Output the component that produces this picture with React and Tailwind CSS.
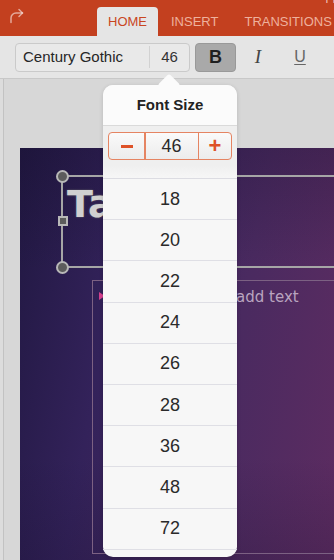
const sizes = [18, 20, 22, 24, 26, 28, 36, 48, 72];

const Handle = ({ className }) => (
  <div
    className={`absolute w-[13px] h-[13px] rounded-full bg-[#5c5c5c] border-2 border-[#b8b8b8] ${className}`}
  />
);

const App = () => {
  return (
    <div
      className="relative w-[334px] h-[560px] overflow-hidden bg-[#d7d7d7] flex flex-col"
      style={{ fontFamily: '"Liberation Sans", Arial, sans-serif' }}
    >
      {/* Ribbon tabs */}
      <div className="relative h-[36px] shrink-0 bg-[#c3401f] flex items-end">
        <span className="absolute right-[-14px] top-[-9px] text-[11px] text-[#f3c9bb]">
          Pres
        </span>
        <svg
          className="self-start mt-[6px] ml-[7px]"
          width="18"
          height="18"
          viewBox="0 0 18 18"
          fill="none"
          stroke="rgba(255,255,255,0.55)"
          strokeWidth="1.5"
          strokeLinecap="round"
          strokeLinejoin="round"
        >
          <path d="M4 16.5 V12 a5 5 0 0 1 5 -5 H15.5" />
          <path d="M12 3.5 L15.5 7 L12 10.5" />
        </svg>
        <div className="ml-[72px] w-[61px] h-[29px] rounded-t-[4px] bg-[#e5e5e5] flex items-center justify-center text-[13px] text-[#c9461f]">
          HOME
        </div>
        <div className="ml-[13px] h-[29px] flex items-center text-[13px] text-[#eeb19d]">
          INSERT
        </div>
        <div className="ml-[26px] h-[29px] flex items-center text-[13px] text-[#eeb19d] whitespace-nowrap">
          TRANSITIONS
        </div>
      </div>

      {/* Toolbar */}
      <div className="h-[43px] shrink-0 bg-[#e5e5e5] border-b border-[#c8c8c8] flex items-center pl-[15px]">
        <div className="w-[175px] h-[29px] rounded-[4px] border border-[#cacaca] bg-[#e9e9e9] flex items-center">
          <div className="w-[133px] pl-[7px] text-[15px] text-[#262626]">Century Gothic</div>
          <div className="w-px h-[22px] bg-[#d2d2d2]" />
          <div className="flex-1 text-center text-[15px] text-[#333]">46</div>
        </div>
        <div className="ml-[5px] w-[41px] h-[29px] rounded-[4px] border border-[#999] bg-[#a9a9a9] flex items-center justify-center text-[18px] font-bold text-[#1f1f1f]">
          B
        </div>
        <div
          className="ml-[12px] w-[20px] text-center text-[19px] italic text-[#444]"
          style={{ fontFamily: '"Liberation Serif", serif' }}
        >
          I
        </div>
        <div className="ml-[22px] w-[20px] text-center text-[16px] underline underline-offset-2 text-[#666]">
          U
        </div>
      </div>

      {/* Editing area */}
      <div className="flex-1 flex">
        <div className="w-[4px] border-r border-[#c2c2c2] bg-[#dcdcdc]" />
        <div className="flex-1 pl-[16px] pt-[69px]">
          <div className="h-[412px] flex flex-col bg-[linear-gradient(rgba(20,12,40,0.25),transparent_30%,transparent_75%,rgba(20,12,40,0.2)),linear-gradient(100deg,#211842_0%,#33225a_30%,#4a2a60_65%,#5d2c61_100%)]">
            <div className="relative mt-[27px] ml-[41px] mr-[-10px] h-[93px] border-2 border-r-0 border-[#a6a6a6]">
              <Handle className="left-[-7.5px] top-[-7.5px]" />
              <div className="absolute left-[-5.5px] top-[39px] w-[10px] h-[10px] bg-[#5c5c5c] border-2 border-[#b8b8b8]" />
              <Handle className="left-[-7.5px] bottom-[-7.5px]" />
              <div
                className="pl-[4px] pt-[6px] text-[38px] font-bold leading-[42px] text-[#d0d0d0] [text-shadow:0_0_2px_#6a6a6a]"
                style={{ fontFamily: '"DejaVu Sans", sans-serif' }}
              >
                Tap
              </div>
            </div>
            <div className="mt-[12px] ml-[72px] mr-[-10px] h-[274px] border border-[#7c6183] pt-[8px] pl-[6px] flex items-start">
              <div className="mt-[3px] w-0 h-0 border-y-[4px] border-y-transparent border-l-[6px] border-l-[#d6418f]" />
              <div
                className="ml-[24px] text-[15px] leading-[16px] text-[#b9a4bf]"
                style={{ fontFamily: '"DejaVu Sans", sans-serif' }}
              >
                Double tap to add text
              </div>
            </div>
          </div>
        </div>
      </div>

      {/* Font size popover */}
      <div className="absolute left-[103px] top-[85px] w-[134px] h-[472px] rounded-[10px] bg-[#f7f7f7] shadow-[0_1px_4px_rgba(0,0,0,0.15)]">
        <div className="absolute left-[58px] top-[-8px] w-[16px] h-[16px] rotate-45 rounded-[2px] bg-[#fbfbfb]" />
        <div className="relative h-[40px] rounded-t-[10px] bg-[#fbfbfb] flex items-center justify-center text-[15px] font-bold text-[#222]">
          Font Size
        </div>
        <div className="h-px bg-[#dadada]" />
        <div className="h-[52px] bg-[linear-gradient(#efefef,#efefef_75%,#f6f6f6)] pt-[6px]">
          <div className="mx-auto w-[124px] h-[28px] rounded-[4px] border-[1.5px] border-[#e58462] bg-[linear-gradient(#fafafa,#ececec)] flex">
            <div className="w-[35px] flex items-center justify-center">
              <div className="w-[12px] h-[3px] bg-[#de5228]" />
            </div>
            <div className="w-[1.5px] bg-[#e58462]" />
            <div className="w-[52px] flex items-center justify-center text-[18px] text-[#2a2a2a]">46</div>
            <div className="w-[1.5px] bg-[#e58462]" />
            <div className="flex-1 flex items-center justify-center text-[22px] font-bold leading-none text-[#de5228]">
              +
            </div>
          </div>
        </div>
        <div className="h-px bg-[#dcdce2]" />
        {sizes.map((s) => (
          <div
            key={s}
            className="h-[41.2px] border-b border-[#dfdfe5] flex items-center justify-center text-[18px] text-[#2a2a2a]"
          >
            {s}
          </div>
        ))}
      </div>
    </div>
  );
};

export default App;
